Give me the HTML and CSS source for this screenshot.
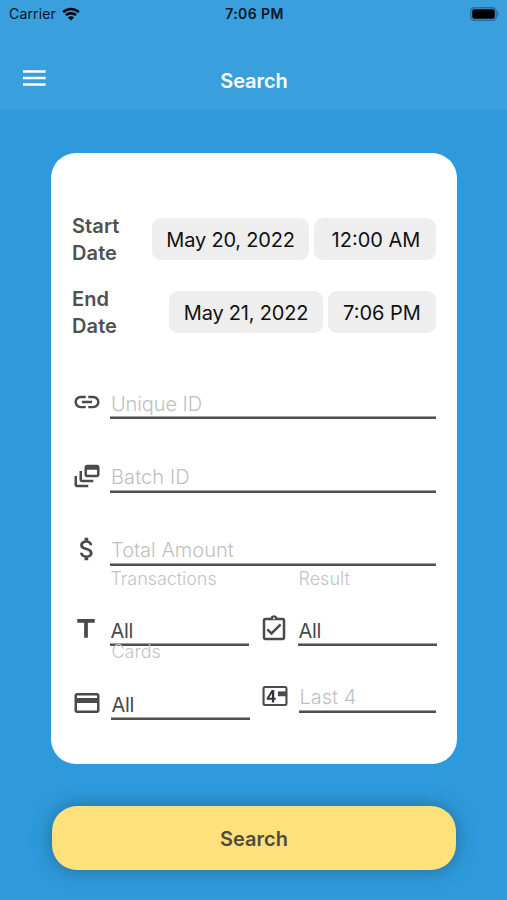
FILE: index.html
```html
<!DOCTYPE html>
<html lang="en">
<head>
<meta charset="utf-8">
<title>Search</title>
<link rel="stylesheet" href="styles.css">
</head>
<body>
<header class="header">
  <div class="status">
    <div class="carrier"><span>Carrier</span>
      <svg class="wifi" viewBox="0 0 18 14"><path d="M1.2 5.2a11.2 11.2 0 0 1 15.6 0M4 8.2a7.2 7.2 0 0 1 10 0" fill="none" stroke="currentColor" stroke-width="2.5"/><path d="M9 13.6 5.9 10.5a4.4 4.4 0 0 1 6.2 0z" fill="currentColor"/></svg>
    </div>
    <div class="clock">7:06 PM</div>
    <svg class="battery" viewBox="0 0 30 14"><rect x=".75" y=".75" width="25.5" height="12.5" rx="3.8" fill="none" stroke="#266f9d" stroke-width="1.5"/><rect x="2.2" y="2.2" width="22.6" height="9.6" rx="2" fill="#000"/><path d="M27.6 4.8v4.4a2.4 2.4 0 0 0 0-4.4z" fill="#266f9d"/></svg>
  </div>
  <div class="navbar">
    <svg class="menu" viewBox="0 0 23 16"><path d="M0 1.5h22.6M0 8h22.6M0 14.5h22.6" stroke="#fff" stroke-width="2.6"/></svg>
    <h1 class="title">Search</h1>
  </div>
</header>
<main class="main">
  <section class="card">
    <div class="date-row">
      <div class="date-label">Start Date</div>
      <div class="pill start-day"><span>May 20, 2022</span></div>
      <div class="pill start-time"><span>12:00 AM</span></div>
    </div>
    <div class="date-row">
      <div class="date-label">End Date</div>
      <div class="pill end-day"><span>May 21, 2022</span></div>
      <div class="pill end-time"><span>7:06 PM</span></div>
    </div>
    <div class="fields">
      <div class="row">
        <svg class="icon" viewBox="0 0 24 24"><path d="M3.9 12c0-1.71 1.39-3.1 3.1-3.1h4V7H7c-2.76 0-5 2.24-5 5s2.24 5 5 5h4v-1.9H7c-1.71 0-3.1-1.39-3.1-3.1zM8 13h8v-2H8v2zm9-6h-4v1.9h4c1.71 0 3.1 1.39 3.1 3.1s-1.39 3.1-3.1 3.1h-4V17h4c2.76 0 5-2.24 5-5s-2.24-5-5-5z"/></svg>
        <div class="field placeholder"><span class="t-unique">Unique ID</span></div>
      </div>
      <div class="row">
        <svg class="icon" viewBox="0 0 24 24"><path d="M8 8H6v7c0 1.1.9 2 2 2h9v-2H8V8z"/><path d="M20 3h-8c-1.1 0-2 .9-2 2v6c0 1.1.9 2 2 2h8c1.1 0 2-.9 2-2V5c0-1.1-.9-2-2-2zm0 8h-8V7h8v4z"/><path d="M4 12H2v7c0 1.1.9 2 2 2h9v-2H4v-7z"/></svg>
        <div class="field placeholder raised"><span class="t-batch">Batch ID</span></div>
      </div>
      <div class="row">
        <svg class="icon" viewBox="0 0 24 24"><path d="M11.8 10.9c-2.27-.59-3-1.2-3-2.15 0-1.09 1.01-1.85 2.7-1.85 1.78 0 2.44.85 2.5 2.1h2.21c-.07-1.72-1.12-3.3-3.21-3.81V3h-3v2.16c-1.94.42-3.5 1.68-3.5 3.61 0 2.31 1.91 3.46 4.7 4.13 2.5.6 3 1.48 3 2.41 0 .69-.49 1.79-2.7 1.79-2.06 0-2.87-.92-2.98-2.1h-2.2c.12 2.19 1.76 3.42 3.68 3.83V21h3v-2.15c1.95-.37 3.5-1.5 3.5-3.55 0-2.84-2.43-3.81-4.7-4.4z"/></svg>
        <div class="field placeholder raised"><span class="t-total">Total Amount</span></div>
      </div>
      <div class="row pair pair-types">
        <svg class="icon" viewBox="0.8 0 24 24"><path d="M5 4v3h5.5v12h3V7H19V4z"/></svg>
        <div class="field select"><label class="t-trans">Transactions</label><span>All</span></div>
        <svg class="icon" viewBox="0 0 24 24"><path fill-rule="evenodd" d="M19 3h-4.18C14.4 1.84 13.3 1 12 1s-2.4.84-2.82 2H5c-1.1 0-2 .9-2 2v14c0 1.1.9 2 2 2h14c1.1 0 2-.9 2-2V5c0-1.1-.9-2-2-2zm-7-.25c.41 0 .75.34.75.75s-.34.75-.75.75-.75-.34-.75-.75.34-.75.75-.75zM19 19H5V5h14v14z"/><path d="m17.99 9-1.41-1.42-6.59 6.59-2.58-2.57-1.42 1.41 4 3.99z"/></svg>
        <div class="field select"><label class="t-result">Result</label><span>All</span></div>
      </div>
      <div class="row pair pair-cards">
        <svg class="icon" viewBox="0 0 24 24"><path d="M20 4H4c-1.11 0-1.99.89-1.99 2L2 18c0 1.11.89 2 2 2h16c1.11 0 2-.89 2-2V6c0-1.11-.89-2-2-2zm0 14H4v-6h16v6zm0-10H4V6h16v2z"/></svg>
        <div class="field select"><label class="t-cards">Cards</label><span>All</span></div>
        <svg class="icon last4-icon" viewBox="0 0 24 24"><path fill-rule="evenodd" d="M4 4h16a2 2 0 0 1 2 2v12a2 2 0 0 1-2 2H4a2 2 0 0 1-2-2V6a2 2 0 0 1 2-2zM3.7 5.6v12.8h16.6V5.6z"/><path d="M14.3 8.3H21v3.9h-6.7z"/><path fill="#303743" fill-rule="evenodd" d="M9.4 7.2h2v6.1h1.2v1.7h-1.2v2.2H9.5V15H5.4v-1.5zM9.5 10l-2.2 3.3h2.2z"/></svg>
        <div class="field placeholder raised last4"><span class="t-last">Last 4</span></div>
      </div>
    </div>
  </section>
  <button class="submit">Search</button>
</main>
</body>
</html>
```

FILE: styles.css
```css
* { box-sizing: border-box; }
body {
  margin: 0;
  height: 900px;
  overflow: hidden;
  background: #2e9adb;
  color: #4a4a4c;
  font-family: Inter, "Liberation Sans", sans-serif;
}
.header { height: 110px; background: #3a9fdd; }
.status {
  display: grid;
  grid-template-columns: 1fr auto 1fr;
  align-items: center;
  height: 27px;
  padding: 0 7px 0 9px;
  font-size: 14px;
  color: #06151f;
}
.carrier { display: flex; align-items: center; gap: 6px; letter-spacing: 0.15px; }
.wifi { width: 18px; height: 14px; color: #000; }
.clock { font-weight: 600; letter-spacing: 0.4px; }
.battery { width: 30px; height: 14px; justify-self: end; }
.navbar {
  display: grid;
  grid-template-columns: 1fr auto 1fr;
  align-items: center;
  height: 62px;
  margin-top: 22px;
  padding: 0 22.5px;
}
.menu { width: 23px; height: 16px; margin-bottom: 4px; }
.title { margin: 1px 0 0 1px; font-size: 20px; font-weight: 600; color: #fff; letter-spacing: -0.05px; }
.main { padding: 43px 51px 0; }
.card {
  width: 406px;
  height: 611px;
  padding: 59px 20px 0;
  border-radius: 25px;
  background: #fff;
}
.date-row { display: flex; align-items: center; height: 54px; margin-bottom: 19px; padding: 0 1px; }
.date-label {
  width: 50px;
  margin-right: auto;
  padding-top: 2px;
  font-size: 20px;
  line-height: 27px;
  font-weight: 600;
  letter-spacing: 0.1px;
  color: #505052;
}
.pill {
  display: flex;
  align-items: center;
  justify-content: center;
  height: 42px;
  margin-left: 5px;
  padding-top: 1px;
  border-radius: 9px;
  background: #eee;
  color: #111;
  font-size: 20px;
  white-space: nowrap;
}
.start-day { width: 157px; letter-spacing: -0.2px; }
.start-time { width: 122px; padding-left: 2px; }
.end-day { width: 154px; letter-spacing: -0.2px; }
.end-time { width: 108px; }
.fields { margin-top: -12px; }
.row { display: flex; align-items: flex-end; height: 73.3px; padding-left: 0.5px; }
.icon { flex: none; width: 30px; height: 30px; margin-bottom: 2px; fill: #4a4a4c; }
.field {
  display: flex;
  flex-direction: column;
  justify-content: flex-end;
  height: 33px;
  width: 326px;
  margin-left: 8.5px;
  padding: 0 0 3px 1px;
  background: linear-gradient(#a0a0a1 1px, #4f4f51 1px) bottom / 100% 3px no-repeat;
  font-size: 20px;
  line-height: 24px;
  white-space: nowrap;
}
.placeholder { color: #bfbfc1; font-weight: 300; }
.raised { padding-bottom: 4px; }
.t-unique { letter-spacing: -0.1px; }
.t-batch { letter-spacing: 0.1px; }
.select { height: 100%; width: 139px; padding: 0 0 3px 0.5px; justify-content: space-between; }
.select span { letter-spacing: -0.3px; }
.select label { padding-top: 1px; font-size: 18px; line-height: 24px; font-weight: 300; color: #c3c3c5; }
.select .t-trans { letter-spacing: -0.05px; }
.pair-types { height: 80.4px; }
.pair-types .icon + .select + .icon { margin-left: 9.5px; }
.pair-types .icon + .select + .icon + .select { margin-left: 9.5px; }
.pair-cards .select { height: 80.5px; margin-left: 9.5px; }
.last4-icon { margin: 0 0 9px 9.5px; }
.last4 { width: 137px; margin: 0 0 7px 9.5px; padding-left: 0.5px; }
.submit {
  display: block;
  width: 404px;
  height: 64px;
  margin: 42px 0 0 1px;
  padding: 2px 0 0;
  border: 0;
  border-radius: 25px;
  background: #ffe17b;
  box-shadow: 0 0 18px rgba(30, 60, 85, 0.5);
  color: #4f4b40;
  font: 600 20px Inter, "Liberation Sans", sans-serif;
}
```
